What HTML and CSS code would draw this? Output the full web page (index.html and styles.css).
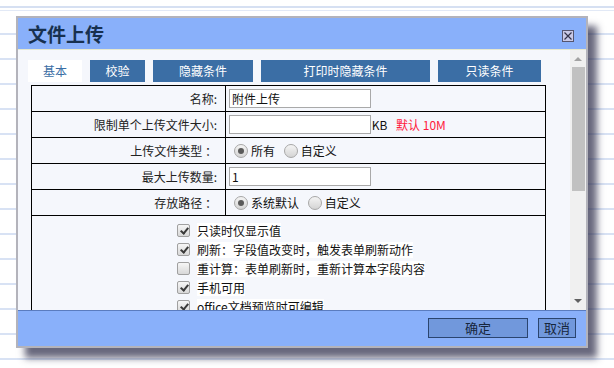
FILE: index.html
```html
<!DOCTYPE html>
<html lang="zh-CN">
  <head>
    <meta charset="UTF-8" />
    <title>文件上传</title>
    <meta name="viewport" content="width=device-width, initial-scale=1.0" />
    <link rel="stylesheet" href="styles.css">
  </head>
  <body>
    <div class="page">
      <!-- dialog window floating over the form page -->
      <div class="dialog">
        <div class="titlebar">
          <span class="title">文件上传</span>
          <span class="close">
            <svg width="12" height="12" viewBox="0 0 12 12">
              <rect x="0.5" y="0.5" width="11" height="11" fill="#c9c9e6" stroke="#55556e" />
              <path d="M2.5 2.5 L9.5 9.5 M9.5 2.5 L2.5 9.5" stroke="#33334a" stroke-width="1.2" />
            </svg>
          </span>
        </div>

        <div class="body">
          <div class="scroll">
            <div class="tabs">
              <span class="tab active t1">基本</span>
              <span class="tab t2">校验</span>
              <span class="tab t3">隐藏条件</span>
              <span class="tab t4">打印时隐藏条件</span>
              <span class="tab t5">只读条件</span>
            </div>

            <table class="form">
              <tr>
                <td class="label">名称:</td>
                <td class="value"><input type="text" class="field" value="附件上传" /></td>
              </tr>
              <tr>
                <td class="label">限制单个上传文件大小:</td>
                <td class="value">
                  <input type="text" class="field" value="" />
                  <span class="unit">KB</span>
                  <span class="hint">默认 10M</span>
                </td>
              </tr>
              <tr>
                <td class="label">上传文件类型 ：</td>
                <td class="value">
                  <span class="radio on"></span><span class="opt">所有</span>
                  <span class="radio"></span><span class="opt">自定义</span>
                </td>
              </tr>
              <tr>
                <td class="label">最大上传数量:</td>
                <td class="value"><input type="text" class="field" value="1" /></td>
              </tr>
              <tr>
                <td class="label">存放路径 ：</td>
                <td class="value">
                  <span class="radio on"></span><span class="opt">系统默认</span>
                  <span class="radio"></span><span class="opt">自定义</span>
                </td>
              </tr>
              <tr>
                <td class="checks" colspan="2">
                  <div class="check-row"><span class="chk on"></span><span class="ctext">只读时仅显示值</span></div>
                  <div class="check-row"><span class="chk on"></span><span class="ctext">刷新：字段值改变时，触发表单刷新动作</span></div>
                  <div class="check-row"><span class="chk"></span><span class="ctext">重计算：表单刷新时，重新计算本字段内容</span></div>
                  <div class="check-row"><span class="chk on"></span><span class="ctext">手机可用</span></div>
                  <div class="check-row"><span class="chk on"></span><span class="ctext">office文档预览时可编辑</span></div>
                </td>
              </tr>
            </table>
          </div>

          <!-- fake scrollbar -->
          <div class="scrollbar">
            <span class="arrow up"></span>
            <span class="thumb"></span>
            <span class="arrow down"></span>
          </div>
        </div>

        <div class="footer">
          <button class="btn ok">确定</button>
          <button class="btn cancel">取消</button>
        </div>
      </div>
    </div>
  </body>
</html>
```

FILE: styles.css
```css
/* General */
body {
  margin: 0;
  font-family: "Noto Sans CJK SC", "Liberation Sans", sans-serif;
  font-size: 12px;
  color: #111;
}
.page {
  position: relative;
  width: 614px;
  height: 368px;
  overflow: hidden;
  background-color: #fff;
  background-image:
    linear-gradient(#d6e0f2, #d6e0f2),
    linear-gradient(#e2e9f6, #e2e9f6),
    repeating-linear-gradient(
      to bottom,
      transparent 0,
      transparent 23px,
      #d8e2f4 23px,
      #d8e2f4 25px
    );
  background-size: 100% 2px, 100% 1px, 100% 100%;
  background-position: 0 6px, 0 10px, 0 10px;
  background-repeat: no-repeat, no-repeat, repeat;
}

/* Dialog window */
.dialog {
  position: absolute;
  left: 16px;
  top: 16px;
  width: 568px;
  border: 2px solid #b3b3bb;
  background-color: #f5f7fc;
  box-shadow: 9px 10px 7px rgba(40, 40, 70, 0.7);
}
.titlebar {
  height: 31px;
  display: flex;
  align-items: center;
  justify-content: space-between;
  padding: 0 12px 0 10px;
  background-color: #89b0fa;
  border-bottom: 1px solid #e6e8cf;
}
.title {
  font-size: 19px;
  font-weight: bold;
  color: #17304f;
  line-height: 1;
}
.close {
  display: flex;
  width: 12px;
  height: 12px;
  margin-top: 4px;
}

/* Body with scroll area */
.body {
  display: flex;
  height: 260px;
}
.scroll {
  flex: 1;
  overflow: hidden;
  padding: 10px 0 0 10px;
}
.tabs {
  display: flex;
  gap: 8px;
  height: 22px;
}
.tab {
  display: flex;
  align-items: center;
  justify-content: center;
  background-color: #3b6ea5;
  color: #fff;
  line-height: 1;
}
.tab.active {
  background-color: #fff;
  color: #3b6ea5;
}
.t1 { width: 54px; }
.t2 { width: 55px; }
.t3 { width: 100px; }
.t4 { width: 169px; }
.t5 { width: 103px; }

/* Form table */
.form {
  margin: 3px 0 0 3px;
  width: 515px;
  border-collapse: collapse;
}
.form td {
  border: 1px solid #000;
  padding: 0;
  height: 25px;
  line-height: 16px;
}
.label {
  width: 185px;
  text-align: right;
  padding-right: 8px !important;
  color: #222;
}
.value {
  padding-left: 3px !important;
  white-space: nowrap;
}
.field {
  width: 142px;
  height: 19px;
  box-sizing: border-box;
  border: 1px solid #a9a9a9;
  padding: 0 2px;
  font-family: inherit;
  font-size: 12px;
  color: #111;
  vertical-align: middle;
  background-color: #fff;
}
.unit {
  vertical-align: middle;
  margin-left: -2px;
}
.hint {
  color: #ff1a3c;
  margin-left: 6px;
  vertical-align: middle;
}
.radio {
  display: inline-block;
  width: 12px;
  height: 12px;
  border: 1px solid #a8a8a8;
  border-radius: 50%;
  background: linear-gradient(#f4f4f4, #d4d4d4);
  vertical-align: middle;
  margin: 0 3px 0 5px;
  position: relative;
}
.radio.on::after {
  content: "";
  position: absolute;
  left: 3px;
  top: 3px;
  width: 6px;
  height: 6px;
  border-radius: 50%;
  background-color: #5a5a5a;
}
.opt {
  vertical-align: middle;
  margin-right: 1px;
}

/* Checkbox list */
.checks {
  padding: 5px 0 0 145px !important;
  vertical-align: top;
  height: 120px !important;
}
.check-row {
  display: flex;
  align-items: center;
  height: 19px;
}
.chk {
  position: relative;
  width: 11px;
  height: 11px;
  border: 1px solid #a0a0a0;
  border-radius: 2px;
  background: linear-gradient(#f6f6f6, #d8d8d8);
  margin-right: 7px;
}
.chk.on::after {
  content: "";
  position: absolute;
  left: 4px;
  top: 1px;
  width: 3px;
  height: 6px;
  border: solid #3a3a3a;
  border-width: 0 2px 2px 0;
  transform: rotate(40deg);
}
.ctext {
  background-color: #fff;
  line-height: 16px;
}

/* Scrollbar */
.scrollbar {
  width: 16px;
  display: flex;
  flex-direction: column;
  align-items: center;
  background-color: #f0f0f0;
}
.arrow {
  width: 0;
  height: 0;
  border-left: 4px solid transparent;
  border-right: 4px solid transparent;
}
.arrow.up {
  border-bottom: 4px solid #a3a3a3;
  margin: 7px 0 6px;
}
.arrow.down {
  border-top: 4px solid #606060;
  margin-top: auto;
  margin-bottom: 7px;
}
.thumb {
  width: 13px;
  height: 124px;
  background-color: #c1c1c1;
}

/* Footer */
.footer {
  height: 35px;
  display: flex;
  justify-content: flex-end;
  align-items: center;
  gap: 10px;
  padding-right: 10px;
  background-color: #89b0fa;
  border-top: 1px solid #5a7cbf;
}
.btn {
  height: 20px;
  padding: 0;
  border: 1px solid #2b456f;
  background-color: #7198dc;
  color: #17263c;
  font-family: inherit;
  font-size: 13px;
  line-height: 1;
  margin-top: -2px;
}
.ok { width: 100px; }
.cancel { width: 38px; }
```
